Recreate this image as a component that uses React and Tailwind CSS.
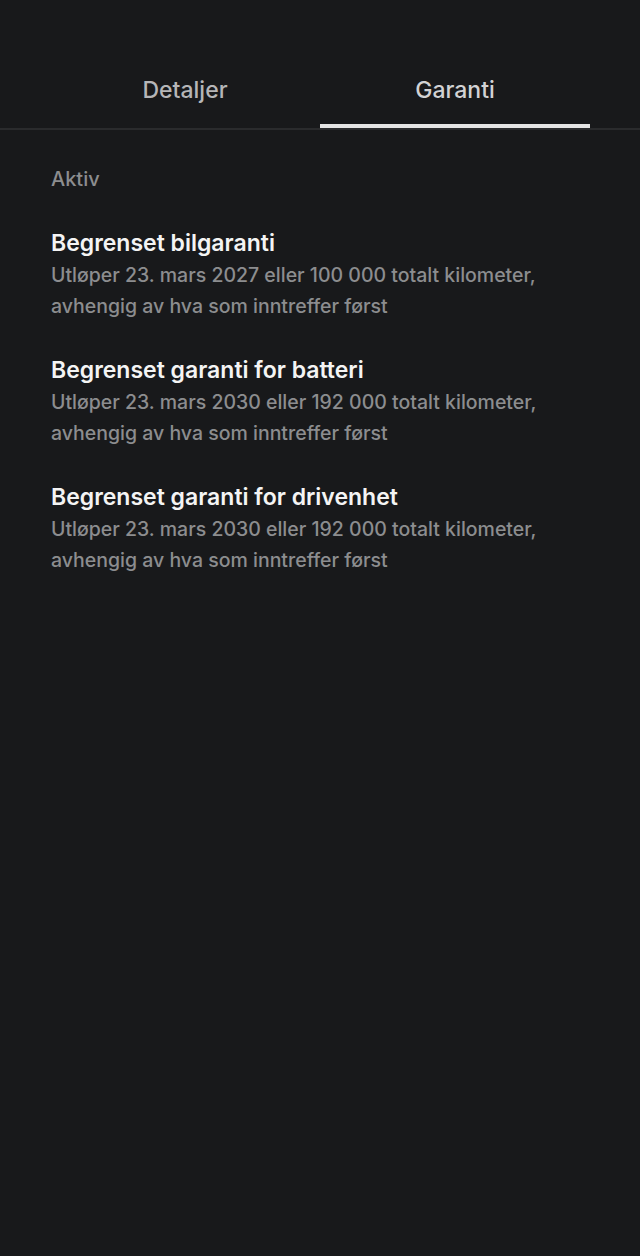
import React from "react";

const items = [
  { title: "Begrenset bilgaranti", text: "Utløper 23. mars 2027 eller 100 000 totalt kilometer, avhengig av hva som inntreffer først" },
  { title: "Begrenset garanti for batteri", text: "Utløper 23. mars 2030 eller 192 000 totalt kilometer, avhengig av hva som inntreffer først" },
  { title: "Begrenset garanti for drivenhet", text: "Utløper 23. mars 2030 eller 192 000 totalt kilometer, avhengig av hva som inntreffer først" },
];

export default function App() {
  return (
    <div className="min-h-[1256px] w-[640px] bg-[#18191b] font-['Inter',sans-serif] antialiased">
      <div className="border-b-2 border-[#2a2b2d] px-[50px] pt-[76px]">
        <div className="flex">
          <div className="flex flex-1 justify-center pb-[24px] text-[23px] font-medium leading-[28px] text-[#b6b6b8]">Detaljer</div>
          <div className="relative flex flex-1 justify-center pb-[24px] text-[23px] font-medium leading-[28px] text-[#d2d2d4]">
            Garanti
            <div className="absolute bottom-0 left-0 right-0 h-[4px] bg-[#e4e4e4]" />
          </div>
        </div>
      </div>
      <div className="px-[51px] pt-[37px]">
        <div className="text-[20px] font-medium leading-[24px] text-[#8c8d8f]">Aktiv</div>
        <div className="mt-[37px] flex flex-col gap-[33px]">
          {items.map((it) => (
            <div key={it.title}>
              <div className="text-[23px] font-semibold leading-[30px] text-[#f4f4f4]">{it.title}</div>
              <div className="mt-[2px] text-[19.5px] font-medium leading-[31px] text-[#8c8d8f]">{it.text}</div>
            </div>
          ))}
        </div>
      </div>
    </div>
  );
}
